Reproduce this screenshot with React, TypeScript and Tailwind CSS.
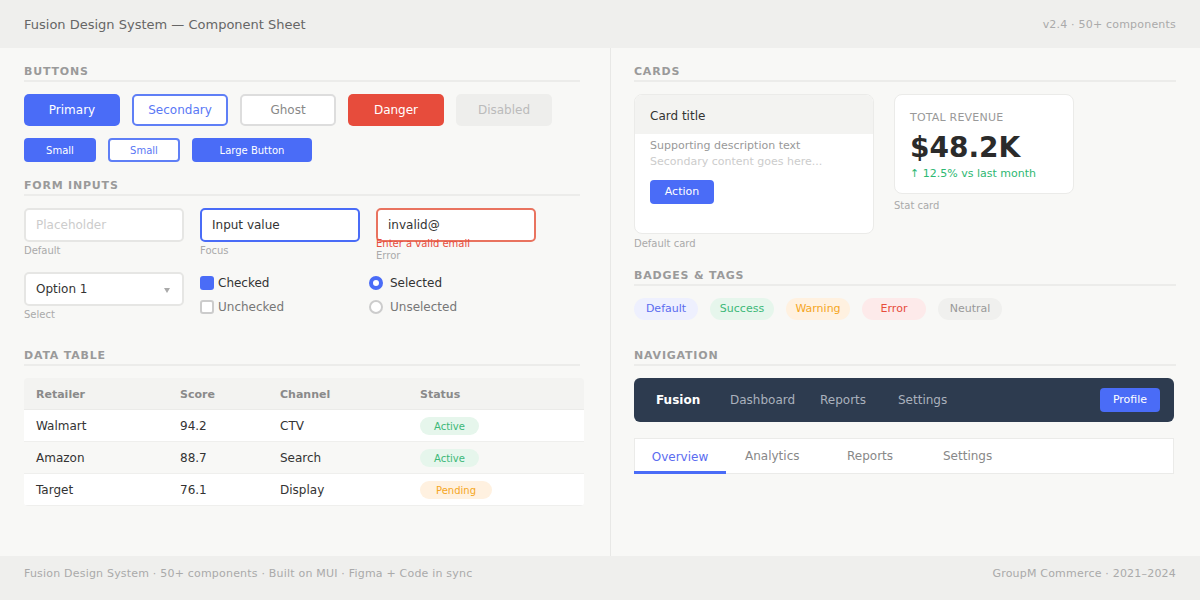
import React from "react";

function H({ children, className = "" }: { children: React.ReactNode; className?: string }) {
  return (
    <div
      className={
        "text-[11px] font-bold tracking-[0.8px] text-[#9a9a9a] leading-[14px] pb-px border-b-2 border-[#ececea] uppercase " +
        className
      }
    >
      {children}
    </div>
  );
}

function Label({ children, className = "" }: { children: React.ReactNode; className?: string }) {
  return <div className={"text-[10px] leading-[14px] text-[#aaaaaa] " + className}>{children}</div>;
}

const rows = [
  { r: "Walmart", s: "94.2", c: "CTV", st: "Active", bg: "bg-white" },
  { r: "Amazon", s: "88.7", c: "Search", st: "Active", bg: "bg-[#f8f8f6]" },
  { r: "Target", s: "76.1", c: "Display", st: "Pending", bg: "bg-white" },
];

export default function App() {
  return (
    <div
      className="w-[1200px] h-[600px] flex flex-col bg-[#f8f8f6] overflow-hidden"
      style={{ fontFamily: '"DejaVu Sans", Verdana, sans-serif' }}
    >
      {/* Header */}
      <div className="h-12 shrink-0 bg-[#efefed] flex items-center justify-between px-6 pt-[2px]">
        <div className="text-[13px] text-[#666666]">Fusion Design System — Component Sheet</div>
        <div className="text-[11px] tracking-[0.2px] text-[#aaaaaa]">v2.4 · 50+ components</div>
      </div>

      {/* Main */}
      <div className="flex-1 flex">
        {/* Left column */}
        <div className="w-[611px] shrink-0 border-r border-[#e8e8e6] pl-6 pr-[30px] pt-[17px]">
          <H>Buttons</H>
          <div className="mt-3 flex gap-3">
            <button className="w-24 h-8 rounded-[5px] bg-[#4a6cf7] text-white text-[12px]">Primary</button>
            <button className="w-24 h-8 rounded-[5px] border-2 border-[#5f7ff6] bg-white text-[#5a78f5] text-[12px]">
              Secondary
            </button>
            <button className="w-24 h-8 rounded-[5px] border-2 border-[#dddddd] bg-white text-[#888888] text-[12px]">
              Ghost
            </button>
            <button className="w-24 h-8 rounded-[5px] bg-[#e74c3c] text-white text-[12px]">Danger</button>
            <button className="w-24 h-8 rounded-[5px] bg-[#eeeeec] text-[#bbbbbb] text-[12px]">Disabled</button>
          </div>
          <div className="mt-3 flex gap-3">
            <button className="w-[72px] h-6 rounded-[4px] bg-[#4a6cf7] text-white text-[10px]">Small</button>
            <button className="w-[72px] h-6 rounded-[4px] border-2 border-[#5f7ff6] bg-white text-[#5a78f5] text-[10px]">
              Small
            </button>
            <button className="w-[120px] h-6 rounded-[4px] bg-[#4a6cf7] text-white text-[10px]">Large Button</button>
          </div>

          <H className="mt-[17px]">Form Inputs</H>
          <div className="mt-3 h-[64px] flex gap-4 items-start">
            <div className="w-[160px]">
              <div className="h-[34px] rounded-[5px] border-2 border-[#e6e6e4] bg-white flex items-center pl-[10px] text-[12px] text-[#cccccc]">
                Placeholder
              </div>
              <Label className="mt-[2px]">Default</Label>
            </div>
            <div className="w-[160px]">
              <div className="h-[34px] rounded-[5px] border-2 border-[#4a6cf7] bg-white flex items-center pl-[10px] text-[12px] text-[#333333]">
                Input value
              </div>
              <Label className="mt-[2px]">Focus</Label>
            </div>
            <div className="w-[160px]">
              <div className="h-[34px] rounded-[5px] border-2 border-[#e9735f] bg-white flex items-center pl-[10px] text-[12px] text-[#333333]">
                invalid@
              </div>
              <div className="-mt-1 text-[10px] leading-[12px] text-[#e74c3c] relative">Enter a valid email</div>
              <div className="text-[10px] leading-[12px] text-[#aaaaaa]">Error</div>
            </div>
          </div>
          <div className="flex items-start">
            <div className="w-[160px]">
              <div className="h-[34px] rounded-[5px] border-2 border-[#e6e6e4] bg-white flex items-center justify-between pl-[10px] pr-[12px] text-[12px] text-[#333333]">
                <span>Option 1</span>
                <svg width="6" height="5" viewBox="0 0 6 5" className="mt-[2px]">
                  <polygon points="0,0 6,0 3,5" fill="#aaaaaa" />
                </svg>
              </div>
              <Label className="mt-[2px]">Select</Label>
            </div>
            <div className="ml-4 w-[169px] -mt-px">
              <div className="h-6 flex items-center gap-1">
                <span className="w-[14px] h-[14px] rounded-[3px] bg-[#4a6cf7]" />
                <span className="text-[12px] text-[#333333]">Checked</span>
              </div>
              <div className="h-6 flex items-center gap-1">
                <span className="w-[14px] h-[14px] rounded-[3px] border-2 border-[#cccccc] bg-white" />
                <span className="text-[12px] text-[#777777]">Unchecked</span>
              </div>
            </div>
            <div className="-mt-px">
              <div className="h-6 flex items-center gap-[7px]">
                <span className="w-[14px] h-[14px] rounded-full border-4 border-[#4a6cf7] bg-white" />
                <span className="text-[12px] text-[#333333]">Selected</span>
              </div>
              <div className="h-6 flex items-center gap-[7px]">
                <span className="w-[14px] h-[14px] rounded-full border-2 border-[#cccccc] bg-white" />
                <span className="text-[12px] text-[#777777]">Unselected</span>
              </div>
            </div>
          </div>

          <H className="mt-[27px]">Data Table</H>
          <div className="mt-3 w-[560px] rounded-[4px] overflow-hidden">
            <div className="h-8 pt-[3px] flex items-center bg-[#f3f3f1] border-b border-[#ebebe9] text-[11px] font-bold text-[#8a8a8a]">
              <div className="w-[144px] pl-3">Retailer</div>
              <div className="w-[100px] pl-3">Score</div>
              <div className="w-[140px] pl-3">Channel</div>
              <div className="flex-1 pl-3">Status</div>
            </div>
            {rows.map((row) => (
              <div
                key={row.r}
                className={"h-8 pt-px flex items-center border-b border-[#efefed] text-[12px] text-[#333333] " + row.bg}
              >
                <div className="w-[144px] pl-3">{row.r}</div>
                <div className="w-[100px] pl-3">{row.s}</div>
                <div className="w-[140px] pl-3">{row.c}</div>
                <div className="flex-1 pl-3 flex">
                  {row.st === "Active" ? (
                    <span className="h-[18px] px-[14px] rounded-full bg-[#e6f6ec] text-[#3cb878] text-[10px] flex items-center">
                      Active
                    </span>
                  ) : (
                    <span className="h-[18px] px-[16px] rounded-full bg-[#fff1e0] text-[#f5a623] text-[10px] flex items-center">
                      Pending
                    </span>
                  )}
                </div>
              </div>
            ))}
          </div>
        </div>

        {/* Right column */}
        <div className="flex-1 pl-[23px] pr-6 pt-[17px]">
          <H>Cards</H>
          <div className="mt-3 flex gap-5 items-start">
            <div>
              <div className="w-[240px] h-[140px] rounded-[8px] border border-[#ebebe9] bg-white overflow-hidden">
                <div className="h-[39px] bg-[#f3f3f1] px-[15px] pt-[13px] text-[12px] leading-[16px] text-[#333333]">
                  Card title
                </div>
                <div className="px-[15px] pt-1">
                  <div className="text-[11px] leading-4 text-[#999999]">Supporting description text</div>
                  <div className="text-[11px] leading-4 text-[#cccccc]">Secondary content goes here...</div>
                  <button className="mt-[10px] w-16 h-6 rounded-[4px] bg-[#4a6cf7] text-white text-[11px]">Action</button>
                </div>
              </div>
              <Label className="mt-[3px]">Default card</Label>
            </div>
            <div>
              <div className="w-[180px] h-[100px] rounded-[8px] border border-[#ebebe9] bg-white px-[15px] pt-4">
                <div className="text-[11px] leading-[14px] tracking-[0.2px] text-[#999999]">TOTAL REVENUE</div>
                <div className="mt-[7px] text-[28px] leading-[32px] font-bold text-[#2b2b2b]">$48.2K</div>
                <div className="mt-[3px] text-[11px] leading-[14px] text-[#2eb872]">↑ 12.5% vs last month</div>
              </div>
              <Label className="mt-[5px]">Stat card</Label>
            </div>
          </div>

          <H className="mt-[18px]">Badges &amp; Tags</H>
          <div className="mt-3 flex gap-3">
            <span className="w-16 h-[22px] rounded-full bg-[#eef0fe] text-[#5b6cf0] text-[11px] flex items-center justify-center">
              Default
            </span>
            <span className="w-16 h-[22px] rounded-full bg-[#e6f6ec] text-[#3cb878] text-[11px] flex items-center justify-center">
              Success
            </span>
            <span className="w-16 h-[22px] rounded-full bg-[#fff1e0] text-[#f5a623] text-[11px] flex items-center justify-center">
              Warning
            </span>
            <span className="w-16 h-[22px] rounded-full bg-[#fdeaea] text-[#e74c3c] text-[11px] flex items-center justify-center">
              Error
            </span>
            <span className="w-16 h-[22px] rounded-full bg-[#f0f0ee] text-[#999999] text-[11px] flex items-center justify-center">
              Neutral
            </span>
          </div>

          <H className="mt-[29px]">Navigation</H>
          <div className="mt-3 w-[540px] h-[44px] rounded-[6px] bg-[#2d3b4f] flex items-center pl-[22px] pr-[14px] text-[12px]">
            <span className="w-[74px] font-bold text-white">Fusion</span>
            <span className="w-[90px] text-[#aab1bd]">Dashboard</span>
            <span className="w-[78px] text-[#aab1bd]">Reports</span>
            <span className="text-[#aab1bd]">Settings</span>
            <button className="ml-auto w-[60px] h-6 rounded-[4px] bg-[#4a6cf7] text-white text-[11px]">Profile</button>
          </div>
          <div className="mt-4 w-[540px] h-[36px] flex border border-[#ebebe9] bg-white text-[12px]">
            <div className="w-[92px] -ml-px -mb-px pt-[3px] border-b-[3px] border-[#4a6cf7] flex items-center justify-center text-[#5b6cf0]">
              Overview
            </div>
            <div className="w-[102px] pl-[19px] flex items-center text-[#888888]">Analytics</div>
            <div className="w-[96px] pl-[19px] flex items-center text-[#888888]">Reports</div>
            <div className="pl-[19px] flex items-center text-[#888888]">Settings</div>
          </div>
        </div>
      </div>

      {/* Footer */}
      <div className="h-[44px] shrink-0 bg-[#efefed] flex justify-between px-6 pt-[11px] text-[11px] leading-[14px] tracking-[0.2px] text-[#aaaaaa]">
        <div>Fusion Design System · 50+ components · Built on MUI · Figma + Code in sync</div>
        <div>GroupM Commerce · 2021–2024</div>
      </div>
    </div>
  );
}
